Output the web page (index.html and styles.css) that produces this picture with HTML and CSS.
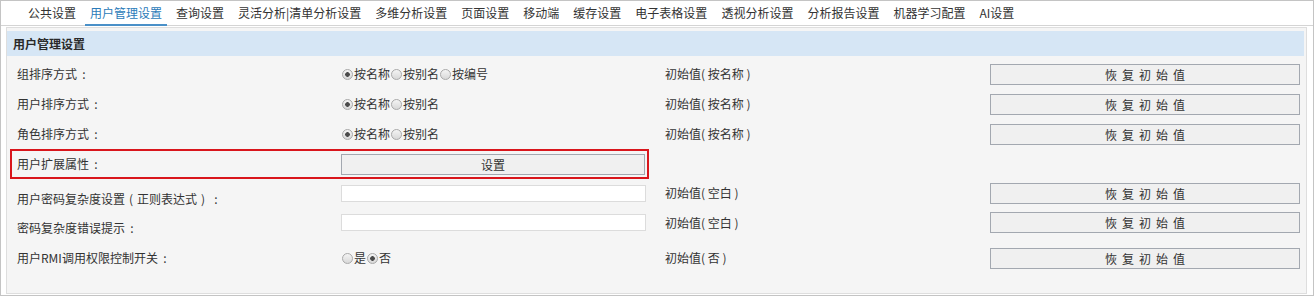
FILE: index.html
```html
<!DOCTYPE html>
<html lang="zh-CN">
<head>
    <meta charset="UTF-8">
    <title>用户管理设置</title>
    <link rel="stylesheet" href="styles.css">
</head>
<body>

<div class="page">
    <div class="tabs">
        <span class="tab">公共设置</span>
        <span class="tab active">用户管理设置</span>
        <span class="tab">查询设置</span>
        <span class="tab">灵活分析|清单分析设置</span>
        <span class="tab">多维分析设置</span>
        <span class="tab">页面设置</span>
        <span class="tab">移动端</span>
        <span class="tab">缓存设置</span>
        <span class="tab">电子表格设置</span>
        <span class="tab">透视分析设置</span>
        <span class="tab">分析报告设置</span>
        <span class="tab">机器学习配置</span>
        <span class="tab">AI设置</span>
    </div>

    <div class="panel">
        <div class="panel-title">用户管理设置</div>

        <div class="rows">
            <div class="row">
                <div class="label">组排序方式<span class="colon">:</span></div>
                <div class="ctrl">
                    <input type="radio" name="group" checked>按名称<input type="radio" name="group">按别名<input type="radio" name="group">按编号
                </div>
                <div class="init">初始值( 按名称 )</div>
                <div><button class="btn reset">恢复初始值</button></div>
            </div>

            <div class="row">
                <div class="label">用户排序方式<span class="colon">:</span></div>
                <div class="ctrl">
                    <input type="radio" name="user" checked>按名称<input type="radio" name="user">按别名
                </div>
                <div class="init">初始值( 按名称 )</div>
                <div><button class="btn reset">恢复初始值</button></div>
            </div>

            <div class="row">
                <div class="label">角色排序方式<span class="colon">:</span></div>
                <div class="ctrl">
                    <input type="radio" name="role" checked>按名称<input type="radio" name="role">按别名
                </div>
                <div class="init">初始值( 按名称 )</div>
                <div><button class="btn reset">恢复初始值</button></div>
            </div>

            <div class="row">
                <div class="marked">
                    <div class="label">用户扩展属性<span class="colon">:</span></div>
                    <div class="ctrl"><button class="btn wide">设置</button></div>
                </div>
            </div>

            <div class="row row-5">
                <div class="label low">用户密码复杂度设置<span class="paren">(</span>正则表达式<span class="paren">)</span><span class="colon">:</span></div>
                <div class="ctrl"><input type="text" class="field"></div>
                <div class="init">初始值( 空白 )</div>
                <div><button class="btn reset">恢复初始值</button></div>
            </div>

            <div class="row row-6">
                <div class="label low2">密码复杂度错误提示<span class="colon">:</span></div>
                <div class="ctrl"><input type="text" class="field"></div>
                <div class="init">初始值( 空白 )</div>
                <div><button class="btn reset">恢复初始值</button></div>
            </div>

            <div class="row row-7">
                <div class="label">用户RMI调用权限控制开关<span class="colon">:</span></div>
                <div class="ctrl">
                    <input type="radio" name="rmi">是<input type="radio" name="rmi" checked>否
                </div>
                <div class="init">初始值( 否 )</div>
                <div><button class="btn reset">恢复初始值</button></div>
            </div>
        </div>
    </div>
</div>

</body>
</html>
```

FILE: styles.css
```css
* {
    box-sizing: border-box;
}

body {
    margin: 0;
    font-family: "Noto Sans CJK SC", "Noto Sans", sans-serif;
    font-size: 12px;
    color: #333;
    background: #fff;
}

.page {
    width: 1314px;
    height: 296px;
    border: 1px solid #c4c4c4;
    background: #fff;
}

/* top tab strip */
.tabs {
    display: flex;
    height: 25px;
    padding-left: 22px;
    border-bottom: 1px solid #d4d4d4;
}

.tab {
    padding: 0 5px;
    margin-right: 4px;
    line-height: 24px;
    white-space: nowrap;
}

.tab.active {
    color: #2b7bb9;
    line-height: 23px;
    border-bottom: 2px solid #4a90c8;
    margin-bottom: -1px;
}

/* settings panel */
.panel {
    height: 267px;
    margin: 1px 6px 0 5px;
    padding: 3px 2px 0 0;
    border: 1px solid #dedede;
    background: #f5f5f5;
}

.panel-title {
    height: 25px;
    line-height: 25px;
    padding-left: 6px;
    background: #d6e6f5;
    font-weight: bold;
    color: #2a2a2a;
}

.rows {
    padding: 3px 0 0 10px;
}

.row {
    display: grid;
    grid-template-columns: 314px 314px 315px 310px;
    column-gap: 10px;
    align-items: center;
    height: 30px;
    line-height: 16px;
}

.row-5 { height: 28px; }
.row-6 { height: 31px; }
.row-7 { height: 40px; }

.label {
    white-space: nowrap;
}

/* full-width punctuation centred in its cell, like the original UI font */
.colon,
.paren {
    display: inline-block;
    width: 12px;
    text-align: center;
}

.colon {
    margin-left: 1px;
}

.label.low {
    align-self: end;
}

.label.low2 {
    align-self: end;
    padding-bottom: 2px;
}

.ctrl {
    display: flex;
    align-items: center;
    white-space: nowrap;
}

/* highlighted row */
.marked {
    grid-column: span 2;
    align-self: stretch;
    display: grid;
    grid-template-columns: 314px 1fr;
    column-gap: 10px;
    align-items: center;
    margin: 0 6px 0 -7px;
    padding-left: 5px;
    border: 2px solid #d9161c;
}

input[type="radio"] {
    appearance: none;
    width: 11px;
    height: 11px;
    margin: 0 1px;
    border: 1px solid #a9a9a9;
    border-radius: 50%;
    background: linear-gradient(#f4f4f4, #d8d8d8);
}

input[type="radio"]:checked {
    background: radial-gradient(circle, #4a4a4a 0 2px, transparent 2.6px), linear-gradient(#f4f4f4, #d8d8d8);
}

.field {
    width: 305px;
    height: 17px;
    border: 1px solid #dcdcdc;
    background: #fff;
}

.btn {
    height: 21px;
    padding: 0;
    border: 1px solid #a3a8b0;
    background: #f0f0f0;
    font-family: inherit;
    font-size: 12px;
    color: #333;
}

.btn.reset {
    width: 310px;
    letter-spacing: 5px;
    padding-left: 5px;
}

.btn.wide {
    width: 304px;
}
```
